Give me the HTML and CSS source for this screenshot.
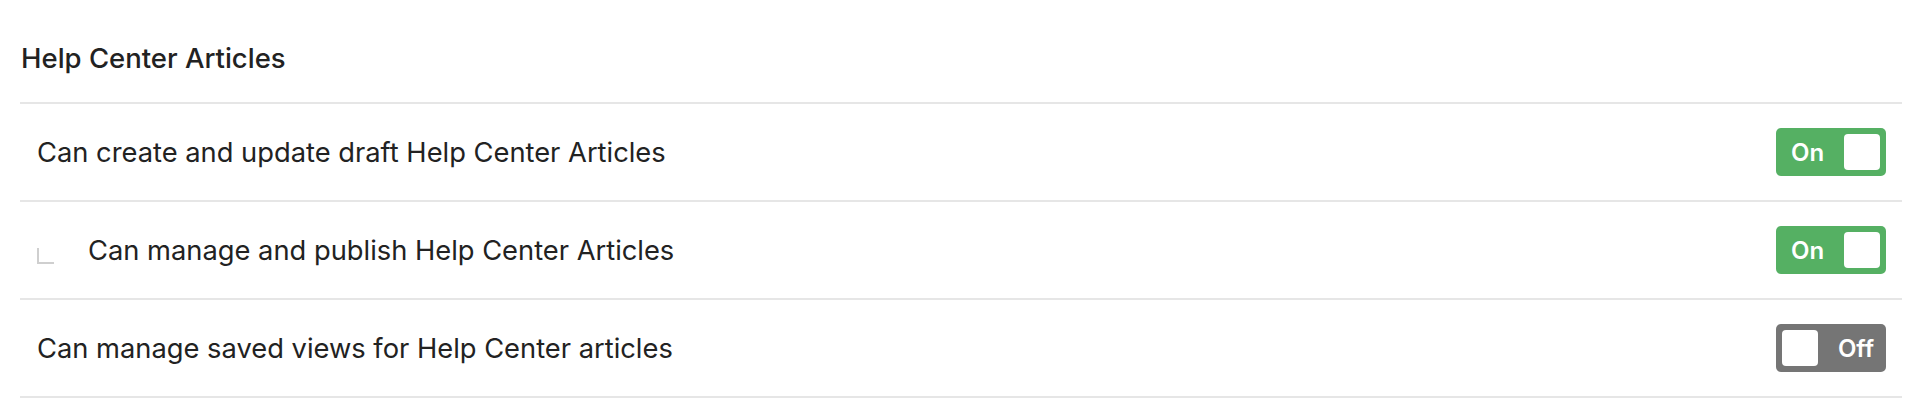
FILE: index.html
```html
<!DOCTYPE html>
<html lang="en">
<head>
    <meta charset="UTF-8">
    <title>Help Center Articles</title>
    <link rel="stylesheet" href="styles.css">
</head>
<body>

<div class="section">
    <h3 class="section-title">Help Center Articles</h3>

    <div class="perm-row">
        <span class="perm-label">Can create and update draft Help Center Articles</span>
        <button class="toggle on"><span class="toggle-text">On</span><span class="knob"></span></button>
    </div>

    <div class="perm-row">
        <span class="perm-label sub">
            <span class="indent-mark"></span>
            Can manage and publish Help Center Articles
        </span>
        <button class="toggle on"><span class="toggle-text">On</span><span class="knob"></span></button>
    </div>

    <div class="perm-row">
        <span class="perm-label">Can manage saved views for Help Center articles</span>
        <button class="toggle off"><span class="knob"></span><span class="toggle-text">Off</span></button>
    </div>
</div>

</body>
</html>
```

FILE: styles.css
```css
* {
    margin: 0;
    padding: 0;
    box-sizing: border-box;
}

body {
    font-family: 'Inter', 'Liberation Sans', sans-serif;
    background: #fff;
    color: #222;
}

.section {
    padding: 0 28px 0 20px;
}

.section-title {
    font-size: 27.5px;
    font-weight: 500;
    line-height: 36px;
    padding: 40px 0 26px 1px;
    border-bottom: 2px solid #e6e6e6;
}

.perm-row {
    display: flex;
    align-items: center;
    justify-content: space-between;
    height: 98px;
    padding: 0 16px 0 17px;
    border-bottom: 2px solid #e6e6e6;
}

.perm-label {
    font-size: 27.3px;
    font-weight: 400;
    display: flex;
    align-items: center;
}

.indent-mark {
    width: 17px;
    height: 16px;
    border-left: 2px solid #cfcfcf;
    border-bottom: 2px solid #cfcfcf;
    margin: 12px 34px 0 0;
}

.toggle {
    display: flex;
    align-items: center;
    justify-content: space-between;
    width: 110px;
    height: 48px;
    padding: 0 6px 0 15px;
    border: none;
    border-radius: 5px;
    font-family: inherit;
    color: #fff;
    cursor: pointer;
}

.toggle.on {
    background-color: #55b063;
}

.toggle.off {
    background-color: #757575;
    padding: 0 12px 0 6px;
}

.toggle-text {
    font-size: 24px;
    font-weight: 600;
}

.knob {
    width: 36px;
    height: 36px;
    background: #fff;
    border-radius: 4px;
}
```
